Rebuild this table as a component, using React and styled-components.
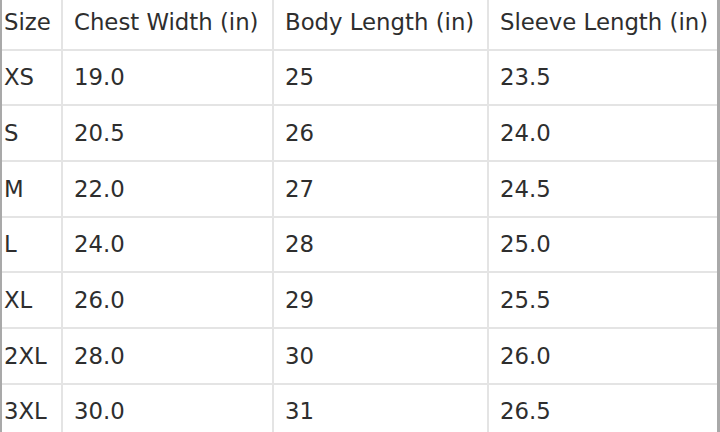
import React from 'react';
import styled, { createGlobalStyle } from 'styled-components';

const Global = createGlobalStyle`
  html, body {
    margin: 0;
    padding: 0;
    background: #fff;
    overflow: hidden;
  }
`;

const Page = styled.div`
  width: 720px;
  height: 432px;
  overflow: hidden;
  background: #fff;
`;

const Grid = styled.div`
  display: grid;
  grid-template-columns: 59px 209px 213px 228px;
  grid-auto-rows: 53.67px;
  gap: 2px;
  margin-top: -5px;
  background: #e4e4e4;
  border-left: 2px solid #a9a9a9;
  border-right: 3px solid #a9a9a9;
  font-family: "DejaVu Sans", Verdana, sans-serif;
  font-size: 22.8px;
  color: #2e2e2e;
`;

const Cell = styled.div`
  background: #fff;
  display: flex;
  align-items: center;
  padding-left: ${({ first }) => (first ? '2px' : '11px')};
  white-space: nowrap;
  overflow: hidden;
`;

const head = ['Size', 'Chest Width (in)', 'Body Length (in)', 'Sleeve Length (in)'];

const rows = [
  ['XS', '19.0', '25', '23.5'],
  ['S', '20.5', '26', '24.0'],
  ['M', '22.0', '27', '24.5'],
  ['L', '24.0', '28', '25.0'],
  ['XL', '26.0', '29', '25.5'],
  ['2XL', '28.0', '30', '26.0'],
  ['3XL', '30.0', '31', '26.5'],
];

export default function App() {
  return (
    <Page>
      <Global />
      <Grid>
        {head.map((h, i) => (
          <Cell key={h} first={i === 0}>{h}</Cell>
        ))}
        {rows.map(r =>
          r.map((v, i) => (
            <Cell key={r[0] + i} first={i === 0}>{v}</Cell>
          ))
        )}
      </Grid>
    </Page>
  );
}
